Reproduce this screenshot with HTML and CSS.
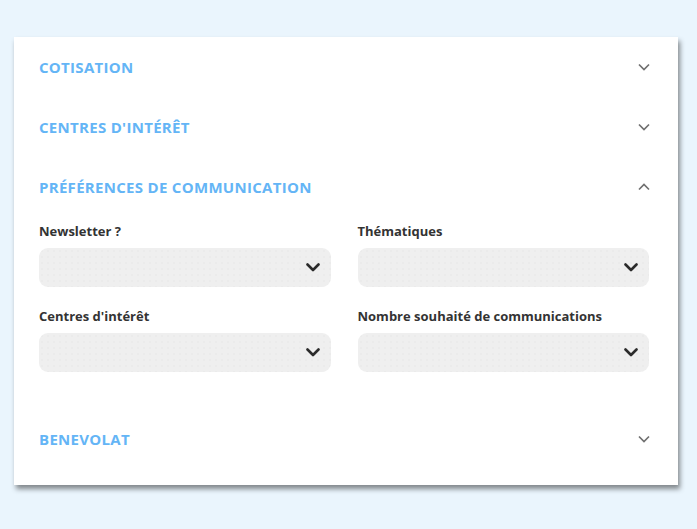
FILE: index.html
```html
<!DOCTYPE html>
<html lang="fr">
<head>
    <meta charset="UTF-8">
    <meta name="viewport" content="width=device-width, initial-scale=1.0">
    <title>Profil adhérent</title>
    <link rel="stylesheet" href="styles.css">
</head>
<body>
    <div class="panel">
        <section class="section">
            <div class="section-head">
                <span class="section-title">COTISATION</span>
                <svg class="caret" width="12" height="8" viewBox="0 0 12 8"><path d="M1 1.5l5 5 5-5" /></svg>
            </div>
        </section>

        <section class="section">
            <div class="section-head">
                <span class="section-title">CENTRES D'INTÉRÊT</span>
                <svg class="caret" width="12" height="8" viewBox="0 0 12 8"><path d="M1 1.5l5 5 5-5" /></svg>
            </div>
        </section>

        <section class="section open">
            <div class="section-head">
                <span class="section-title">PRÉFÉRENCES DE COMMUNICATION</span>
                <svg class="caret" width="12" height="8" viewBox="0 0 12 8"><path d="M1 6.5l5-5 5 5" /></svg>
            </div>
            <div class="section-body">
                <div class="field">
                    <label>Newsletter ?</label>
                    <div class="select">
                        <svg width="14" height="9" viewBox="0 0 14 9"><path d="M1.5 1.5l5.5 5.5 5.5-5.5" /></svg>
                    </div>
                </div>
                <div class="field">
                    <label>Thématiques</label>
                    <div class="select">
                        <svg width="14" height="9" viewBox="0 0 14 9"><path d="M1.5 1.5l5.5 5.5 5.5-5.5" /></svg>
                    </div>
                </div>
                <div class="field">
                    <label>Centres d'intérêt</label>
                    <div class="select">
                        <svg width="14" height="9" viewBox="0 0 14 9"><path d="M1.5 1.5l5.5 5.5 5.5-5.5" /></svg>
                    </div>
                </div>
                <div class="field">
                    <label>Nombre souhaité de communications</label>
                    <div class="select">
                        <svg width="14" height="9" viewBox="0 0 14 9"><path d="M1.5 1.5l5.5 5.5 5.5-5.5" /></svg>
                    </div>
                </div>
            </div>
        </section>

        <section class="section">
            <div class="section-head">
                <span class="section-title">BENEVOLAT</span>
                <svg class="caret" width="12" height="8" viewBox="0 0 12 8"><path d="M1 1.5l5 5 5-5" /></svg>
            </div>
        </section>
    </div>
</body>
</html>
```

FILE: styles.css
```css
html {
    background-color: #eaf5fd;
}

body {
    margin: 0;
    min-height: 529px;
    padding: 37px 0 0 14px;
    box-sizing: border-box;
    background-color: #eaf5fd;
    font-family: "Open Sans", "Noto Sans", sans-serif;
}

.panel {
    width: 610px;
    padding: 0 29px 16px 25px;
    background-color: #fff;
    box-shadow: 2px 4px 5px rgba(0, 0, 0, 0.45);
}

.section-head {
    display: flex;
    justify-content: space-between;
    align-items: center;
    height: 60px;
    cursor: pointer;
}

.section-title {
    color: #64b5f6;
    font-size: 15px;
    font-weight: 700;
    letter-spacing: 0.3px;
}

.caret {
    margin-right: -1px;
}

.caret path {
    fill: none;
    stroke: #707070;
    stroke-width: 1.7;
}

.section-body {
    display: grid;
    grid-template-columns: 1fr 1fr;
    column-gap: 27px;
    row-gap: 20px;
    padding: 5px 0 37px;
}

.field label {
    display: block;
    height: 18px;
    margin-bottom: 8px;
    color: #333;
    font-size: 13px;
    font-weight: 700;
    line-height: 18px;
}

.select {
    display: flex;
    justify-content: flex-end;
    align-items: center;
    height: 39px;
    padding-right: 11px;
    border-radius: 9px;
    background-color: #efefef;
    background-image: radial-gradient(circle, #e2e2e2 0.5px, transparent 0.8px);
    background-size: 6px 6px;
}

.select path {
    fill: none;
    stroke: #2b2b2b;
    stroke-width: 2.6;
    stroke-linecap: round;
    stroke-linejoin: round;
}
```
